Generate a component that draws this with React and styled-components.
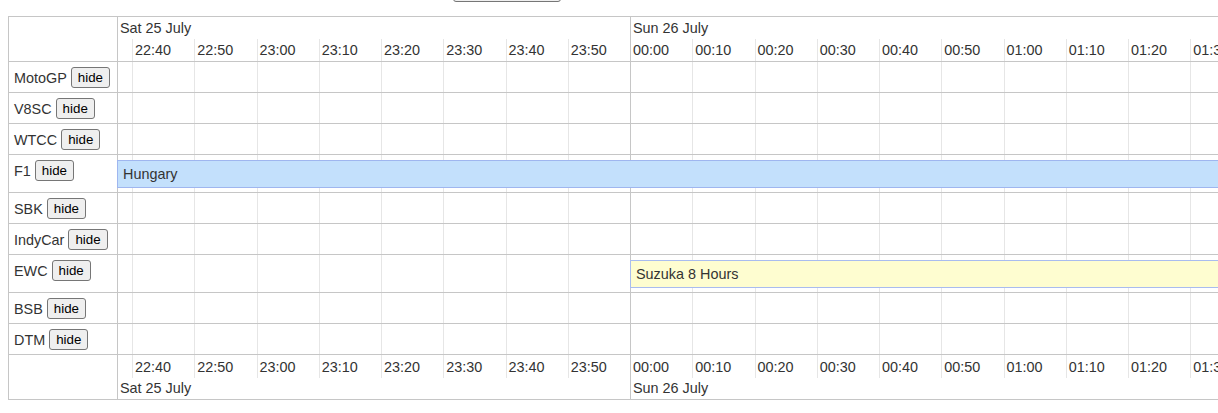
import React from 'react';
import styled, { createGlobalStyle } from 'styled-components';

const GlobalStyle = createGlobalStyle`
  body {
    margin: 0;
    font-family: "Liberation Sans", Arial, sans-serif;
    font-size: 14.4px;
    color: #333;
    background: #fff;
  }
`;

const LINE = '#c6c6c6';
const TICK = '#e6e6e6';
const COLUMNS = '14px repeat(20, 62.25px)';

const Page = styled.div`
  padding-left: 8px;
  overflow: hidden;
`;

const Toolbar = styled.div`
  margin-top: -20px;
  padding-left: 445px;
  height: 22px;
`;

const ToolButton = styled.button`
  width: 108px;
  height: 22px;
  font-family: "Liberation Sans", Arial, sans-serif;
  font-size: 13.33px;
  background: #efefef;
  border: 1px solid #767676;
  border-radius: 3px;
`;

const Table = styled.div`
  margin-top: 14px;
  width: max-content;
  border: 1px solid ${LINE};
`;

const Row = styled.div`
  display: flex;
  border-bottom: ${p => (p.$last ? 'none' : `1px solid ${LINE}`)};
`;

const LabelCell = styled.div`
  box-sizing: border-box;
  width: 109px;
  flex: none;
  display: flex;
  align-items: center;
  align-self: stretch;
  gap: 4px;
  padding: 5px 0 4px 5px;
  border-right: 1px solid ${LINE};

  & > span {
    display: flex;
    align-items: center;
    height: 21px;
    align-self: flex-start;
  }
`;

const HideButton = styled.button`
  align-self: flex-start;
  height: 21px;
  padding: 1px 6px;
  font-family: "Liberation Sans", Arial, sans-serif;
  font-size: 13.33px;
  color: #000;
  background: #efefef;
  border: 1px solid #767676;
  border-radius: 3px;
`;

const Track = styled.div`
  display: grid;
  grid-template-columns: ${COLUMNS};
  grid-template-rows: ${p => p.$rows || 'auto'};
`;

const Slot = styled.div`
  grid-row: ${p => p.$row || '1'};
  grid-column: ${p => p.$col};
  border-left: ${p => (p.$day ? `1px solid ${LINE}` : p.$spacer ? 'none' : `1px solid ${TICK}`)};
  padding-left: 2px;
  padding-top: ${p => p.$lift || 0}px;
  line-height: ${p => 22 - (p.$lift || 0)}px;
  white-space: nowrap;
  overflow: hidden;
`;

const DateCell = styled.div`
  grid-row: ${p => p.$row};
  grid-column: ${p => p.$span};
  border-left: ${p => (p.$day ? `1px solid ${LINE}` : 'none')};
  padding-left: 2px;
  line-height: ${p => p.$height}px;
  white-space: nowrap;
`;

const Bar = styled.div`
  grid-row: 1;
  grid-column: ${p => p.$start} / -1;
  margin: 5px 0 4px ${p => (p.$start === 1 ? '-1px' : '0')};
  box-sizing: border-box;
  height: 28px;
  line-height: 26px;
  padding-left: 5px;
  border: 1px solid ${p => p.$edge};
  background: ${p => p.$fill};
  white-space: nowrap;
  overflow: hidden;
`;

const times = [
  '22:40', '22:50', '23:00', '23:10', '23:20', '23:30', '23:40', '23:50',
  '00:00', '00:10', '00:20', '00:30', '00:40', '00:50',
  '01:00', '01:10', '01:20', '01:30', '01:40', '01:50',
];

const series = [
  { name: 'MotoGP' },
  { name: 'V8SC' },
  { name: 'WTCC' },
  { name: 'F1', event: { title: 'Hungary', start: 1, fill: '#c3e0fc', edge: '#9fb6ef' } },
  { name: 'SBK' },
  { name: 'IndyCar' },
  { name: 'EWC', event: { title: 'Suzuka 8 Hours', start: 10, fill: '#fefdd0', edge: '#a9bcef' } },
  { name: 'BSB' },
  { name: 'DTM' },
];

const TimeSlots = ({ row, label, lift }) => (
  <>
    <Slot $row={row} $col={1} $spacer $lift={lift} />
    {times.map((t, i) => (
      <Slot key={t} $row={row} $col={i + 2} $day={t === '00:00'} $lift={lift}>
        {label ? t : null}
      </Slot>
    ))}
  </>
);

const Dates = ({ row, height }) => (
  <>
    <DateCell $row={row} $span="1 / 10" $height={height}>Sat 25 July</DateCell>
    <DateCell $row={row} $span="10 / -1" $height={height} $day>Sun 26 July</DateCell>
  </>
);

const App = () => (
  <Page>
    <GlobalStyle />
    <Toolbar>
      <ToolButton aria-label="show hidden" />
    </Toolbar>
    <Table>
      <Row>
        <LabelCell />
        <Track $rows="22px 22px">
          <Dates row={1} height={22} />
          <TimeSlots row={2} label />
        </Track>
      </Row>
      {series.map(s => (
        <Row key={s.name}>
          <LabelCell>
            <span>{s.name}</span>
            <HideButton>hide</HideButton>
          </LabelCell>
          <Track>
            <TimeSlots row={1} />
            {s.event && (
              <Bar $start={s.event.start} $fill={s.event.fill} $edge={s.event.edge}>
                {s.event.title}
              </Bar>
            )}
          </Track>
        </Row>
      ))}
      <Row $last>
        <LabelCell />
        <Track $rows="23px 21px">
          <TimeSlots row={1} label lift={2} />
          <Dates row={2} height={21} />
        </Track>
      </Row>
    </Table>
  </Page>
);

export default App;
